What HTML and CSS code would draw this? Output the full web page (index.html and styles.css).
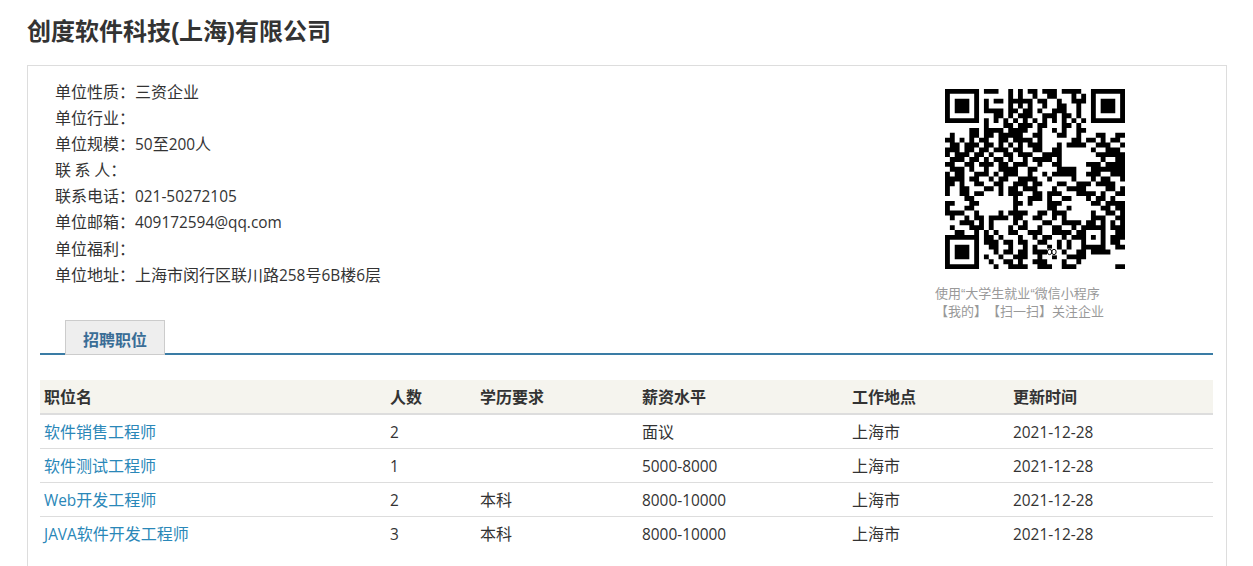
FILE: index.html
```html
<!DOCTYPE html>
<html lang="zh-CN">
<head>
<meta charset="utf-8">
<title>创度软件科技(上海)有限公司</title>
<link rel="stylesheet" href="styles.css">
</head>
<body>
<main class="page">
  <h1 class="title">创度软件科技(上海)有限公司</h1>
  <section class="panel">
    <div class="summary">
      <ul class="facts">
        <li>单位性质：三资企业</li>
        <li>单位行业：</li>
        <li>单位规模：<span class="lat">50</span>至<span class="lat">200</span>人</li>
        <li>联 系 人：</li>
        <li>联系电话：<span class="lat">021-50272105</span></li>
        <li>单位邮箱：<span class="lat">409172594@qq.com</span></li>
        <li>单位福利：</li>
        <li>单位地址：上海市闵行区联川路<span class="lat">258</span>号<span class="lat">6B</span>楼<span class="lat">6</span>层</li>
      </ul>
      <div class="qr">
        <svg class="qr-code" viewBox="0 0 37 37" width="180" height="180" aria-label="QR">
          <path fill="none" stroke="#000" d="M0 .5h7M0 1.5h1M6 1.5h1M0 2.5h1M2 2.5h3M6 2.5h1M0 3.5h1M2 3.5h3M6 3.5h1M0 4.5h1M2 4.5h3M6 4.5h1M0 5.5h1M6 5.5h1M0 6.5h7M30 .5h7M30 1.5h1M36 1.5h1M30 2.5h1M32 2.5h3M36 2.5h1M30 3.5h1M32 3.5h3M36 3.5h1M30 4.5h1M32 4.5h3M36 4.5h1M30 5.5h1M36 5.5h1M30 6.5h7M0 30.5h7M0 31.5h1M6 31.5h1M0 32.5h1M2 32.5h3M6 32.5h1M0 33.5h1M2 33.5h3M6 33.5h1M0 34.5h1M2 34.5h3M6 34.5h1M0 35.5h1M6 35.5h1M0 36.5h7"/>
          <path fill="none" stroke="#000" d="M8 .5h3M13 .5h1M15 .5h1M17 .5h2M20 .5h3M24 .5h4
          M13 1.5h1M15 1.5h1M18 1.5h1M21 1.5h2M26 1.5h1M28 1.5h1
          M8 2.5h1M10 2.5h2M13 2.5h2M15 2.5h3M19 2.5h2M23 2.5h1M26 2.5h2M28 2.5h1
          M8 3.5h1M13 3.5h1M15 3.5h1M17 3.5h1M20 3.5h1M23 3.5h2M27 3.5h1
          M8 4.5h4M13 4.5h2M16 4.5h2M19 4.5h1M22 4.5h3M27 4.5h1
          M10 5.5h2M13 5.5h1M15 5.5h3M20 5.5h3M24 5.5h2M27 5.5h1
          M8 6.5h1M10 6.5h1M12 6.5h1M14 6.5h1M16 6.5h1M18 6.5h1M20 6.5h1M22 6.5h1M24 6.5h1M26 6.5h1M28 6.5h1
          M8 7.5h1M12 7.5h2M15 7.5h3M19 7.5h2M24 7.5h2M27 7.5h1
          M5 8.5h2M8 8.5h4M13 8.5h4M19 8.5h1M22 8.5h1M24 8.5h1M27 8.5h2
          M1 9.5h1M5 9.5h2M8 9.5h2M11 9.5h5M18 9.5h2M23 9.5h2M27 9.5h1M31 9.5h2M35 9.5h2
          M0 10.5h2M3 10.5h1M5 10.5h1M7 10.5h2M11 10.5h2M14 10.5h4M19 10.5h1M26 10.5h2M29 10.5h2M32 10.5h1M34 10.5h2
          M1 11.5h2M4 11.5h3M8 11.5h2M11 11.5h1M13 11.5h1M15 11.5h1M17 11.5h3M23 11.5h1M25 11.5h4M31 11.5h3M36 11.5h1
          M0 12.5h3M4 12.5h2M7 12.5h2M10 12.5h3M14 12.5h2M18 12.5h2M22 12.5h2M30 12.5h1M33 12.5h3
          M0 13.5h1M2 13.5h2M4 13.5h1M6 13.5h2M9 13.5h1M12 13.5h2M15 13.5h3M20 13.5h4M31 13.5h6
          M1 14.5h3M5 14.5h2M8 14.5h1M10 14.5h2M13 14.5h1M16 14.5h1M18 14.5h4M23 14.5h1M32 14.5h1M35 14.5h2
          M0 15.5h2M4 15.5h2M7 15.5h3M11 15.5h2M14 15.5h3M19 15.5h1M22 15.5h2M29 15.5h3M33 15.5h4
          M1 16.5h3M5 16.5h1M8 16.5h1M11 16.5h4M17 16.5h2M23 16.5h4M30 16.5h7
          M0 17.5h1M2 17.5h2M6 17.5h3M10 17.5h1M12 17.5h3M17 17.5h1M20 17.5h1M22 17.5h5M29 17.5h3M34 17.5h3
          M0 18.5h4M5 18.5h2M9 18.5h1M11 18.5h2M15 18.5h4M21 18.5h1M26 18.5h1M30 18.5h1M32 18.5h2M36 18.5h1
          M0 19.5h2M3 19.5h1M6 19.5h2M10 19.5h2M14 19.5h3M18 19.5h2M23 19.5h2M27 19.5h3M31 19.5h4
          M0 20.5h1M3 20.5h2M8 20.5h2M11 20.5h1M13 20.5h2M16 20.5h3M22 20.5h1M25 20.5h4M33 20.5h2M36 20.5h1
          M0 21.5h1M3 21.5h2M6 21.5h2M11 21.5h1M13 21.5h3M18 21.5h2M21 21.5h3M27 21.5h4M32 21.5h1M35 21.5h2
          M4 22.5h2M14 22.5h1M17 22.5h3M21 22.5h1M24 22.5h2M29 22.5h1M31 22.5h2M34 22.5h1
          M0 23.5h2M5 23.5h2M14 23.5h2M17 23.5h1M21 23.5h3M30 23.5h2M33 23.5h4
          M0 24.5h1M4 24.5h2M14 24.5h1M21 24.5h2M25 24.5h1M32 24.5h2M35 24.5h2
          M0 25.5h3M3 25.5h1M6 25.5h1M11 25.5h1M13 25.5h4M19 25.5h2M22 25.5h3M30 25.5h1M33 25.5h2M36 25.5h1
          M1 26.5h1M4 26.5h1M6 26.5h2M9 26.5h4M14 26.5h2M18 26.5h2M22 26.5h1M24 26.5h1M30 26.5h3M35 26.5h2
          M3 27.5h3M7 27.5h1M9 27.5h1M14 27.5h1M16 27.5h1M20 27.5h2M24 27.5h4M29 27.5h2M32 27.5h1M34 27.5h1M36 27.5h1
          M1 28.5h1M5 28.5h3M9 28.5h1M13 28.5h1M15 28.5h2M19 28.5h1M22 28.5h2M26 28.5h1M28 28.5h5M34 28.5h3
          M2 29.5h2M6 29.5h1M8 29.5h1M10 29.5h1M13 29.5h2M17 29.5h3M22 29.5h4M27 29.5h2M32 29.5h1M35 29.5h2
          M8 30.5h2M11 30.5h1M15 30.5h1M18 30.5h1M20 30.5h2M24 30.5h1M26 30.5h3M30 30.5h1M32 30.5h1M34 30.5h3
          M8 31.5h3M12 31.5h2M15 31.5h2M19 31.5h2M23 31.5h1M25 31.5h1M28 31.5h1M32 31.5h1M34 31.5h2
          M9 32.5h2M13 32.5h1M16 32.5h1M18 32.5h1M21 32.5h1M23 32.5h1M25 32.5h1M28 32.5h5M35 32.5h2
          M10 33.5h1M12 33.5h2M15 33.5h2M18 33.5h3M24 33.5h1M27 33.5h2M30 33.5h4
          M8 34.5h1M11 34.5h1M14 34.5h3M19 34.5h1M22 34.5h1M25 34.5h4
          M9 35.5h1M12 35.5h2M15 35.5h1M18 35.5h3M24 35.5h1M27 35.5h1
          M10 36.5h1M13 36.5h4M19 36.5h3M24 36.5h3M35 36.5h2"/>
          <rect x="21" y="32.8" width="2" height="1.4" fill="#fff"/>
          <ellipse cx="21.5" cy="33.5" rx=".45" ry=".55" fill="none" stroke="#000" stroke-width=".2"/>
          <ellipse cx="22.4" cy="33.5" rx=".45" ry=".55" fill="none" stroke="#000" stroke-width=".2"/>
        </svg>
        <p class="qr-note">使用<span class="quote">“</span>大学生就业<span class="quote">“</span>微信小程序<br>【我的】【扫一扫】关注企业</p>
      </div>
    </div>
    <div class="tabs"><a class="tab">招聘职位</a></div>
    <table class="jobs">
      <colgroup>
        <col class="c1"><col class="c2"><col class="c3"><col class="c4"><col class="c5"><col class="c6">
      </colgroup>
      <thead>
        <tr><th>职位名</th><th>人数</th><th>学历要求</th><th>薪资水平</th><th>工作地点</th><th>更新时间</th></tr>
      </thead>
      <tbody>
        <tr><td><a class="job">软件销售工程师</a></td><td><span class="lat">2</span></td><td></td><td>面议</td><td>上海市</td><td><span class="lat">2021-12-28</span></td></tr>
        <tr><td><a class="job">软件测试工程师</a></td><td><span class="lat">1</span></td><td></td><td><span class="lat">5000-8000</span></td><td>上海市</td><td><span class="lat">2021-12-28</span></td></tr>
        <tr><td><a class="job"><span class="lat">Web</span>开发工程师</a></td><td><span class="lat">2</span></td><td>本科</td><td><span class="lat">8000-10000</span></td><td>上海市</td><td><span class="lat">2021-12-28</span></td></tr>
        <tr class="last"><td><a class="job"><span class="lat">JAVA</span>软件开发工程师</a></td><td><span class="lat">3</span></td><td>本科</td><td><span class="lat">8000-10000</span></td><td>上海市</td><td><span class="lat">2021-12-28</span></td></tr>
      </tbody>
    </table>
  </section>
</main>
</body>
</html>
```
FILE: styles.css
```css
* { box-sizing: border-box; }
html, body { margin: 0; height: 566px; overflow: hidden; background: #fff; }
body {
  font-family: "Noto Sans CJK SC", "Open Sans", sans-serif;
  font-size: 16px;
  color: #333;
  text-spacing-trim: space-all;
}
.page { height: 566px; display: flex; flex-direction: column; padding: 13px 26px 0 27px; }
.title {
  margin: 0 0 14px;
  font-family: "Liberation Sans", "Noto Sans CJK SC", sans-serif;
  font-size: 24px;
  line-height: 38px;
  font-weight: 700;
  color: #333;
}
.panel {
  flex: 1;
  min-height: 0;
  border: 1px solid #ddd;
  border-bottom: 0;
  padding: 12px 13px 0 12px;
}
.summary { display: flex; justify-content: space-between; height: 242px; }
.facts {
  list-style: none;
  margin: 0;
  padding: 0 0 0 15px;
  line-height: 26.1px;
}
.facts li { white-space: pre; height: 26.1px; }
.lat { font-family: "Open Sans", sans-serif; font-size: 15.4px; }
.quote { font-family: "Liberation Sans", sans-serif; line-height: 0; }
.qr { width: 278px; padding-top: 11px; }
.qr-code { display: block; margin-left: 10px; }
.qr-note {
  margin: 15px 0 0;
  font-size: 13px;
  line-height: 18px;
  color: #999;
  white-space: nowrap;
}
.tabs { border-bottom: 2px solid #3a7ca5; height: 35px; padding-left: 25px; }
.tab {
  display: block;
  width: 100px;
  height: 35px;
  border: 1px solid #ccc;
  background: #eee;
  color: #3a6d96;
  font-weight: 700;
  text-align: center;
  line-height: 36px;
}
.jobs {
  width: 1173px;
  margin-top: 25px;
  border-collapse: separate;
  border-spacing: 0;
  table-layout: fixed;
}
.c1 { width: 346px; }
.c2 { width: 90px; }
.c3 { width: 162px; }
.c4 { width: 210px; }
.c5 { width: 161px; }
.c6 { width: 204px; }
.jobs th {
  height: 35px;
  padding: 0 4px 2px;
  background: #f5f4ee;
  border-bottom: 2px solid #ddd;
  text-align: left;
  font-weight: 700;
  color: #333;
}
.jobs td {
  height: 34px;
  padding: 0 4px 2px;
  border-bottom: 1px solid #ddd;
}
.jobs .last td { border-bottom: 0; }
.job { color: #2a87b8; }
```
